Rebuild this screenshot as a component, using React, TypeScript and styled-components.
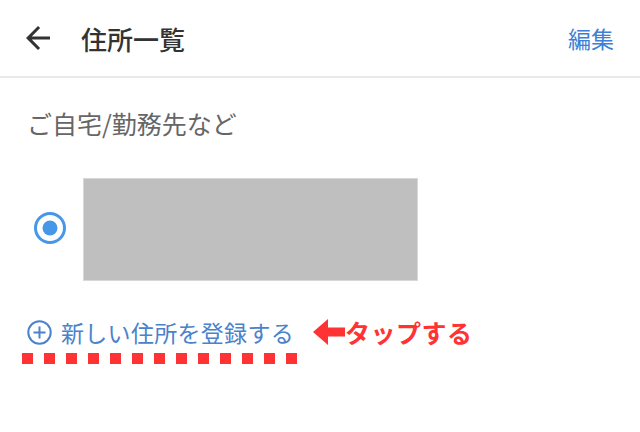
import React from "react";
import styled, { createGlobalStyle } from "styled-components";

const GlobalStyle = createGlobalStyle`
    body {
        margin: 0;
        background: #ffffff;
        font-family: "Noto Sans CJK JP", "Noto Sans", sans-serif;
    }
`;

const Page = styled.div`
    width: 640px;
    height: 432px;
    overflow: hidden;
    background: #ffffff;
`;

const Header = styled.header`
    height: 76px;
    display: flex;
    align-items: center;
    padding: 0 26px 0 20px;
    border-bottom: 2px solid #e9e9e9;
`;

const BackButton = styled.button`
    display: flex;
    padding: 0;
    border: none;
    background: transparent;
    color: #333333;
`;

const Title = styled.h1`
    margin: 0 0 0 25px;
    flex: 1;
    font-size: 26px;
    font-weight: 500;
    color: #333333;
`;

const EditLink = styled.a`
    font-size: 23px;
    color: #3d7fd6;
    text-decoration: none;
`;

const SectionLabel = styled.h2`
    margin: 30px 0 0 27px;
    font-size: 25px;
    line-height: 30px;
    font-weight: 400;
    color: #666666;
`;

const AddressRow = styled.div`
    display: flex;
    align-items: center;
    margin-top: 40px;
    padding-left: 33px;
    gap: 16px;
`;

const Radio = styled.span`
    display: flex;
    width: 34px;
    height: 34px;
    margin-top: -4px;
`;

const Masked = styled.div`
    width: 333px;
    height: 101px;
    background: #bfbfbf;
    border: 1px solid #d8d8d8;
`;

const AddRow = styled.div`
    display: flex;
    align-items: center;
    margin-top: 37px;
    padding-left: 27px;
    height: 28px;
`;

const AddLink = styled.a`
    display: flex;
    align-items: center;
    gap: 9px;
    font-size: 23px;
    letter-spacing: 0.3px;
    color: #4a82cc;
    text-decoration: none;
`;

const Note = styled.span`
    display: flex;
    align-items: center;
    margin-left: 19px;
    font-size: 25px;
    letter-spacing: 0.5px;
    font-weight: 700;
    color: #ff3333;
`;

const Dots = styled.div`
    display: flex;
    gap: 11px;
    margin-top: 7px;
    padding-left: 22px;
`;

const Dot = styled.span`
    width: 11px;
    height: 11px;
    background: #ff3333;
`;

export default function App() {
    return (
        <Page>
            <GlobalStyle />
            <Header>
                <BackButton>
                    <svg width="36" height="36" viewBox="0 0 24 24">
                        <path
                            fill="currentColor"
                            d="M20 11H7.83l5.59-5.59L12 4l-8 8 8 8 1.41-1.41L7.83 13H20v-2z"
                        />
                    </svg>
                </BackButton>
                <Title>住所一覧</Title>
                <EditLink>編集</EditLink>
            </Header>
            <SectionLabel>ご自宅/勤務先など</SectionLabel>
            <AddressRow>
                <Radio>
                    <svg width="34" height="34" viewBox="0 0 34 34">
                        <circle cx="17" cy="17" r="14.5" fill="none" stroke="#4797e8" strokeWidth="3" />
                        <circle cx="17" cy="17" r="7.5" fill="#4797e8" />
                    </svg>
                </Radio>
                <Masked />
            </AddressRow>
            <AddRow>
                <AddLink>
                    <svg width="25" height="25" viewBox="0 0 25 25">
                        <circle cx="12.5" cy="12.5" r="11.2" fill="none" stroke="#4a82cc" strokeWidth="2" />
                        <path d="M12.5 6.5v12M6.5 12.5h12" stroke="#4a82cc" strokeWidth="2" />
                    </svg>
                    新しい住所を登録する
                </AddLink>
                <Note>
                    <svg width="32" height="28" viewBox="0 0 32 28">
                        <path d="M0 14 L15 1 L15 9.5 L32 9.5 L32 18.5 L15 18.5 L15 27 Z" fill="#ff3333" />
                    </svg>
                    タップする
                </Note>
            </AddRow>
            <Dots>
                {Array.from({ length: 13 }).map((_, i) => (
                    <Dot key={i} />
                ))}
            </Dots>
        </Page>
    );
}
